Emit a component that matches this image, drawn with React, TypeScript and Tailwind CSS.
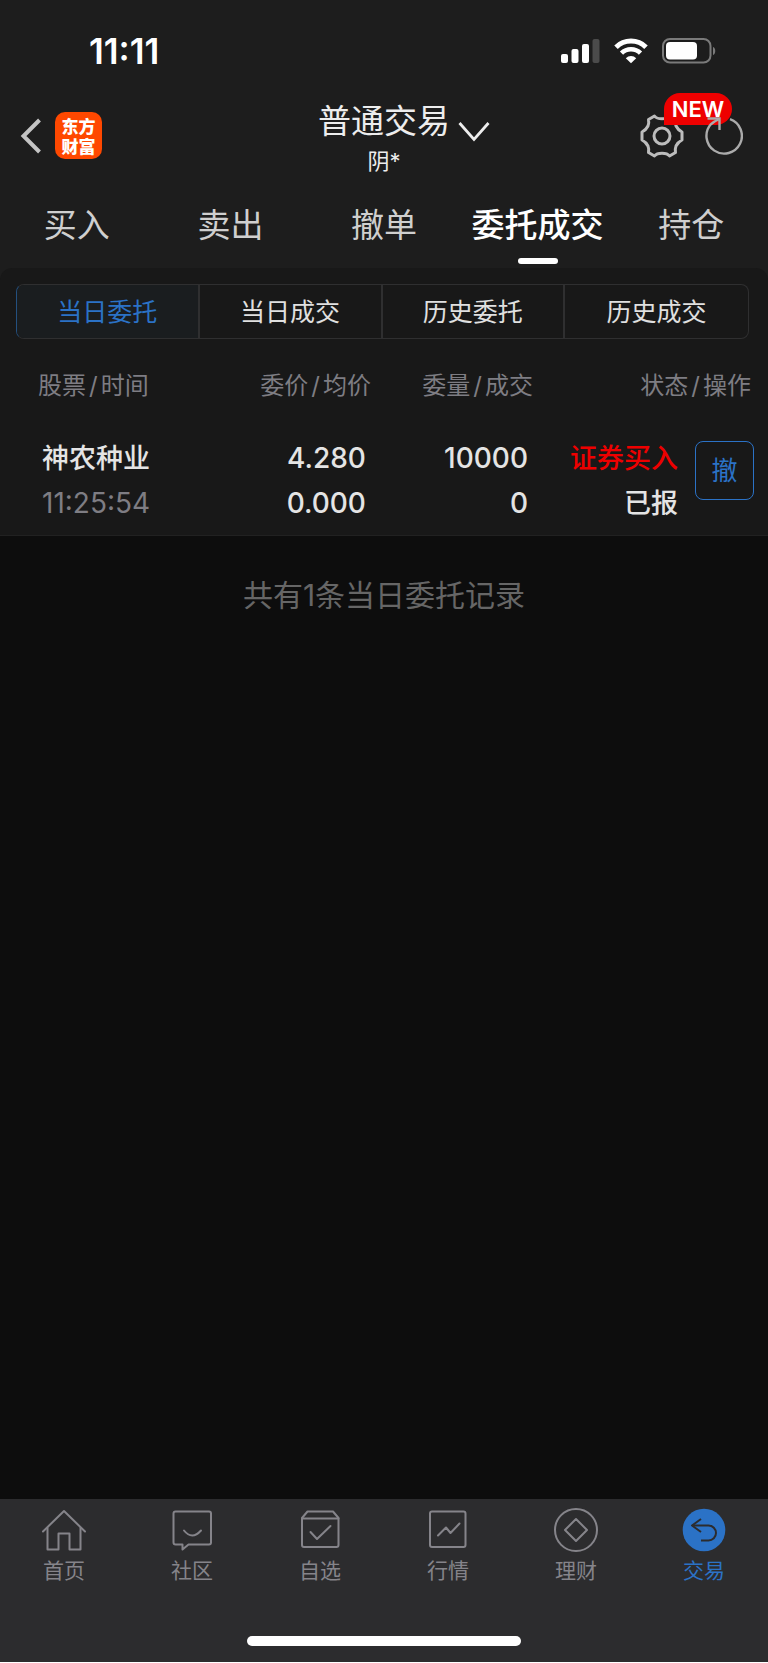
import React from "react";

const tabs = ["买入", "卖出", "撤单", "委托成交", "持仓"];
const segments = ["当日委托", "当日成交", "历史委托", "历史成交"];

type Order = {
  name: string;
  time: string;
  price: string;
  average: string;
  amount: string;
  filled: string;
  side: string;
  status: string;
};

const orders: Order[] = [
  {
    name: "神农种业",
    time: "11:25:54",
    price: "4.280",
    average: "0.000",
    amount: "10000",
    filled: "0",
    side: "证券买入",
    status: "已报",
  },
];

function StatusBar() {
  return (
    <div className="flex h-[102px] items-center justify-between pr-[52px] pl-[89px]">
      <time className="text-[35px] leading-9 font-semibold text-white">11:11</time>
      <div className="flex items-center gap-[14px]">
        <svg width="39" height="26" viewBox="0 0 39 26" fill="#fff" aria-label="信号">
          <rect x="0" y="16" width="7" height="9" rx="2" />
          <rect x="10.5" y="11" width="7" height="14" rx="2" />
          <rect x="21" y="6" width="7" height="19" rx="2" />
          <rect x="31.5" y="1" width="7" height="24" rx="2" fill="#4b4b4b" />
        </svg>
        <svg width="34" height="26" viewBox="0 0 34 26" fill="none" stroke="#fff" aria-label="无线网络">
          <path d="M2 9.2 A21.5 21.5 0 0 1 32 9.2" strokeWidth="5" />
          <path d="M7.5 15.2 A13.5 13.5 0 0 1 26.5 15.2" strokeWidth="4.6" />
          <path d="M17 25.3 L11.8 20.2 A7.5 7.5 0 0 1 22.2 20.2 Z" fill="#fff" stroke="none" />
        </svg>
        <svg width="54" height="26" viewBox="0 0 54 26" fill="none" aria-label="电池">
          <rect x="1" y="1" width="47.5" height="23.5" rx="7" stroke="#7a7a7a" strokeWidth="2" />
          <rect x="4" y="4" width="31" height="17.5" rx="4" fill="#fff" />
          <path d="M51 9 C54 10 54 16 51 17 Z" fill="#7a7a7a" />
        </svg>
      </div>
    </div>
  );
}

function TitleBar() {
  return (
    <div className="grid h-[82px] grid-cols-[1fr_auto_1fr] items-start">
      <div className="flex h-[67px] items-center gap-3 pl-5">
        <button type="button" aria-label="返回">
          <svg width="23" height="36" viewBox="0 0 23 36" fill="none" stroke="#c4c4c4" strokeWidth="4">
            <path d="M19.5 2 L3.5 18 L19.5 34" />
          </svg>
        </button>
        <a
          href="#home"
          className="flex size-[47px] items-center justify-center rounded-[10px] bg-[#ff4800] font-['Noto_Sans_CJK_SC',sans-serif] text-[17px] leading-5 font-black text-white"
        >
          <span className="w-[34px] break-all">东方财富</span>
        </a>
      </div>
      <div className="flex flex-col items-center text-[#ededed]">
        <button type="button" className="flex items-start pl-10">
          <span className="text-[33px] leading-[38px]">普通交易</span>
          <svg className="mt-[19px] ml-2" width="32" height="21" viewBox="0 0 32 21" fill="none" stroke="#ededed" strokeWidth="2.8">
            <path d="M1.5 2 L16 18.5 L30.5 2" />
          </svg>
        </button>
        <span className="mt-[5px] text-[22px] leading-7">阴*</span>
      </div>
      <div className="flex h-[68px] items-center justify-end gap-[21px] pr-[25px]">
        <button type="button" aria-label="设置" className="relative">
          <svg width="44" height="44" viewBox="0 0 44 44" fill="none" stroke="#bcbcbc" strokeWidth="3" strokeLinejoin="round">
            <path d="M14.500 2 Q16.500 4.800 22 4.800 Q27.500 4.800 29.500 2 L35.500 5.500 Q34.800 9 36 12 Q38 16 42 18 V26 Q38 28 36 32 Q34.800 35 35.500 38.500 L29.500 42 Q27.500 39.200 22 39.200 Q16.500 39.200 14.500 42 L8.500 38.500 Q9.200 35 8 32 Q6 28 2 26 V18 Q6 16 8 12 Q9.200 9 8.500 5.500 Z" />
            <circle cx="22" cy="22" r="8" />
          </svg>
          <span className="absolute -top-[21px] left-6 flex h-8 w-[68px] items-center justify-center rounded-t-2xl rounded-br-2xl bg-[#ee0000] text-[22px] font-semibold text-white">
            NEW
          </span>
        </button>
        <button type="button" aria-label="刷新" className="relative">
          <svg width="38" height="44" viewBox="0 0 38 44" fill="none" stroke="#ababab" strokeWidth="2.4">
            <path d="M25 5.200 A17.700 17.700 0 1 1 5.800 10.300 Q8.500 7.500 14.500 5" />
            <path d="M2.500 4.500 H14.500 V16" />
          </svg>
        </button>
      </div>
    </div>
  );
}

function Tabs() {
  return (
    <nav className="grid h-[84px] grid-cols-5 text-[33px]">
      {tabs.map((tab) =>
        tab === "委托成交" ? (
          <a key={tab} href="#orders" aria-current="page" className="relative flex items-center justify-center font-medium text-white">
            {tab}
            <span className="absolute bottom-1 left-1/2 h-1.5 w-10 -translate-x-1/2 rounded-full bg-white" />
          </a>
        ) : (
          <a key={tab} href="#tab" className="flex items-center justify-center text-[#cfcfcf]">
            {tab}
          </a>
        ),
      )}
    </nav>
  );
}

function Segments() {
  return (
    <div className="mr-[19px] ml-4 grid h-[55px] grid-cols-4 overflow-hidden rounded-lg border border-[#2f2f30] border-l-[#24507f] text-[25px]">
      {segments.map((segment, index) =>
        index === 0 ? (
          <button key={segment} type="button" aria-pressed="true" className="border-r-2 border-[#2f2f30] bg-[#1a1d1f] pt-0.5 text-[#2b72c6]">
            {segment}
          </button>
        ) : (
          <button key={segment} type="button" aria-pressed="false" className="border-r-2 border-[#2f2f30] pt-0.5 text-[#e0e0e0] last:border-r-0">
            {segment}
          </button>
        ),
      )}
    </div>
  );
}

function PairLabel({ first, second }: { first: string; second: string }) {
  return (
    <>
      {first}
      <span className="mx-[3px]">/</span>
      {second}
    </>
  );
}

function OrderTable() {
  return (
    <table className="mt-3 w-full table-fixed border-collapse">
      <colgroup>
        <col className="w-[27.300%]" />
        <col className="w-[21%]" />
        <col className="w-[21.100%]" />
        <col />
      </colgroup>
      <thead>
        <tr className="h-16 text-[24px] whitespace-nowrap text-[#7e7d83]">
          <th className="pt-1.5 pl-[38px] text-left font-normal">
            <PairLabel first="股票" second="时间" />
          </th>
          <th className="pt-1.5 text-right font-normal">
            <PairLabel first="委价" second="均价" />
          </th>
          <th className="pt-1.5 text-right font-normal">
            <PairLabel first="委量" second="成交" />
          </th>
          <th className="pt-1.5 pr-[17px] text-right font-normal">
            <PairLabel first="状态" second="操作" />
          </th>
        </tr>
      </thead>
      <tbody>
        {orders.map((order) => (
          <tr key={order.time} className="border-b border-[#212121] align-top text-[27px] leading-[45px] font-medium whitespace-nowrap text-[#e4e4e4]">
            <td className="pt-[21px] pb-[9px] pl-[42px]">
              <div>{order.name}</div>
              <div className="text-[28px] font-normal text-[#7e7d83]">{order.time}</div>
            </td>
            <td className="pt-[21px] pr-[5px] pb-[9px] text-right text-[28px]">
              <div>{order.price}</div>
              <div>{order.average}</div>
            </td>
            <td className="pt-[21px] pr-[5px] pb-[9px] text-right text-[28px]">
              <div>{order.amount}</div>
              <div>{order.filled}</div>
            </td>
            <td className="pt-[21px] pr-[14px] pb-[9px]">
              <div className="flex items-start justify-end gap-[17px]">
                <div className="text-right">
                  <div className="text-[#ee0000]">{order.side}</div>
                  <div>{order.status}</div>
                </div>
                <button type="button" className="mt-[5px] flex size-[59px] items-center justify-center rounded-lg border border-[#2b72c6] text-[26px] font-normal text-[#2b72c6]">
                  撤
                </button>
              </div>
            </td>
          </tr>
        ))}
      </tbody>
    </table>
  );
}

const iconProps = {
  width: 44,
  height: 44,
  viewBox: "0 0 44 44",
  fill: "none",
  stroke: "currentColor",
  strokeWidth: 2,
  strokeLinejoin: "round" as const,
  strokeLinecap: "round" as const,
};

const navItems = [
  {
    label: "首页",
    icon: (
      <svg {...iconProps}>
        <path d="M1 23.500 L22 3 L43 23.500" />
        <path d="M5.500 20 V41.500 H16.500 V25.500 H27.500 V41.500 H38.500 V20" />
      </svg>
    ),
  },
  {
    label: "社区",
    icon: (
      <svg {...iconProps}>
        <path d="M5.500 3.500 H39 Q41 3.500 41 5.500 V34.500 Q41 36.500 39 36.500 H18.500 L12.500 41.500 V36.500 H5.500 Q3.500 36.500 3.500 34.500 V5.500 Q3.500 3.500 5.500 3.500 Z" />
        <path d="M14 22.500 Q22 32.500 31 22.500" />
      </svg>
    ),
  },
  {
    label: "自选",
    icon: (
      <svg {...iconProps}>
        <path d="M4 10 L9.500 3.500 H35 L40.500 10 V37 Q40.500 39 38.500 39 H6 Q4 39 4 37 Z" />
        <path d="M4 10.500 H40.500" />
        <path d="M12.500 24 L19 31 L32.500 18" />
      </svg>
    ),
  },
  {
    label: "行情",
    icon: (
      <svg {...iconProps}>
        <rect x="4" y="3.500" width="35.500" height="35.500" rx="2" />
        <path d="M12 27.500 L20 19.500 L24.500 25 L33.500 15.500" />
      </svg>
    ),
  },
  {
    label: "理财",
    icon: (
      <svg {...iconProps}>
        <circle cx="22" cy="22" r="21" />
        <path d="M22 11 L33 22 L22 33 L11 22 Z" />
      </svg>
    ),
  },
  {
    label: "交易",
    active: true,
    icon: (
      <svg {...iconProps} stroke="#2c2c2e" strokeLinecap="butt">
        <circle cx="22" cy="22" r="21.300" fill="#2b72c6" stroke="none" />
        <path d="M19 11 L10 17.500 L19 24" />
        <path d="M10 17.500 H26.500 A7.500 7.500 0 0 1 26.500 32.500 H19" />
      </svg>
    ),
  },
];

function BottomNav() {
  return (
    <footer className="flex h-[164px] flex-col justify-between border-b border-white bg-[#2c2c2e] pt-[9px] pb-4">
      <nav className="grid grid-cols-6 text-[21px] leading-[30px]">
        {navItems.map((item) => (
          <a
            key={item.label}
            href="#nav"
            className={item.active ? "flex flex-col items-center gap-1 text-[#2b72c6]" : "flex flex-col items-center gap-1 text-[#85848a]"}
          >
            {item.icon}
            <span>{item.label}</span>
          </a>
        ))}
      </nav>
      <div className="mx-auto h-2.5 w-[274px] rounded-full bg-white" />
    </footer>
  );
}

export default function App() {
  return (
    <div lang="zh-CN" className="flex min-h-screen flex-col bg-[#0d0d0d] font-['Inter','Noto_Sans_CJK_SC',sans-serif]">
      <header className="bg-[#1d1d1d]">
        <StatusBar />
        <TitleBar />
        <Tabs />
      </header>
      <main className="flex-1">
        <div className="bg-[#1d1d1d]">
          <section className="rounded-t-xl bg-[#181818] pt-4">
            <Segments />
            <OrderTable />
          </section>
        </div>
        <p className="pt-[37px] text-center text-[30px] leading-[44px] text-[#666]">共有1条当日委托记录</p>
      </main>
      <BottomNav />
    </div>
  );
}
